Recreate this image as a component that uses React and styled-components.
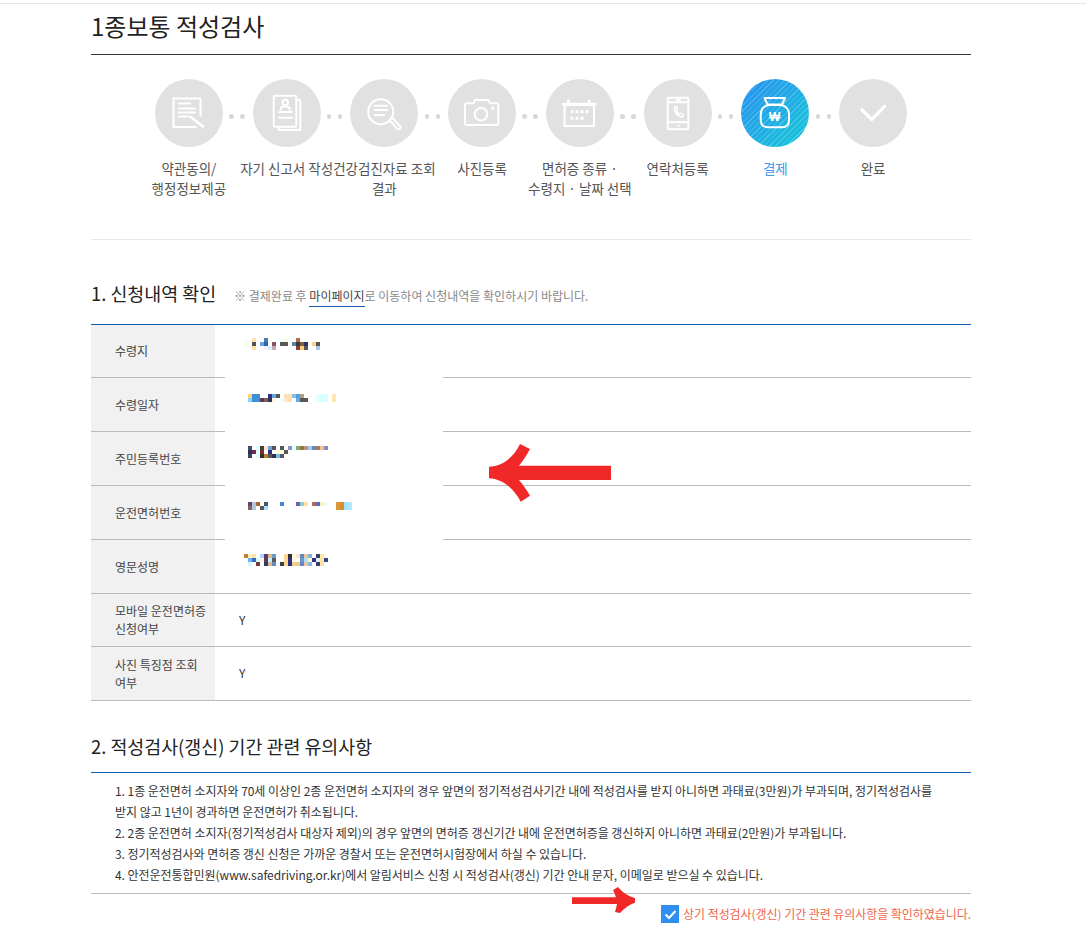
import React from "react";
import styled, { createGlobalStyle } from "styled-components";

const Global = createGlobalStyle`
  html, body { margin: 0; padding: 0; background: #fff; }
  body { font-family: "Noto Sans CJK KR", "Noto Sans", sans-serif; color: #333; overflow: hidden; }
`;
const Page = styled.div`
  height: 934px; padding-top: 3px; box-sizing: border-box; overflow: hidden;
`;
const TopRule = styled.div`height: 1px; background: #e6e6e6;`;
const Container = styled.main`width: 880px; margin: 0 0 0 91px; position: relative;`;
const Title = styled.h1`
  margin: 0; height: 51px; box-sizing: border-box; padding-top: 4px; border-bottom: 1px solid #333;
  font-size: 24px; font-weight: 400; line-height: 36px; color: #222;
`;
const Steps = styled.ol`
  list-style: none; margin: 0; padding: 24px 49px 0; height: 185px; box-sizing: border-box;
  display: grid; grid-template-columns: repeat(8, 97.75px); border-bottom: 1px solid #e8e8e8;
`;
const Step = styled.li`
  display: flex; flex-direction: column; align-items: center; position: relative;
  &:not(:last-child)::after {
    content: ""; position: absolute; left: 89px; top: 35px; width: 4.500px; height: 4.500px; border-radius: 50%;
    background: #d8d8d8; box-shadow: 11px 0 0 #d8d8d8;
  }
`;
const Circle = styled.div`
  width: 68px; height: 68px; border-radius: 50%; flex: none; overflow: hidden;
  background: ${p => p.$active
    ? "repeating-linear-gradient(-45deg, rgba(255,255,255,.2) 0 1px, transparent 1px 4px), linear-gradient(135deg, #2b8ff2, #14c9d6)"
    : "#e1e1e1"};
`;
const IconSvg = styled.svg`display: block;`;
const Label = styled.div`
  margin-top: 11px; width: 120px; text-align: center; font-size: 13.5px; line-height: 20px;
  color: ${p => p.$active ? "#3d97ee" : "#555"}; white-space: pre-line; flex: none;
`;
const SectionHead = styled.div`
  display: flex; align-items: baseline; gap: 18px; margin-top: ${p => p.$top}px; height: ${p => p.$h}px;
`;
const H2 = styled.h2`margin: 0; font-size: 18.4px; font-weight: 400; line-height: 28px; color: #222;`;
const Note = styled.p`
  margin: 0; font-size: 12px; color: #888; line-height: 18px;
`;
const PageLink = styled.span`
  color: #444; border-bottom: 1px solid #1a5aa8; padding-bottom: 2px;
`;
const Table = styled.div`border-top: 1px solid #0f5cb0; position: relative;`;
const Row = styled.div`
  display: grid; grid-template-columns: 124px 1fr; height: ${p => p.$h}px; box-sizing: border-box; border-bottom: 1px solid #bbb;
`;
const Th = styled.div`
  background: #f1f1f1; padding: 0 8px 0 24px; display: flex; align-items: center; font-size: 12px; line-height: 18px; color: #444; white-space: pre-line;
`;
const Td = styled.div`padding: 0 0 2px 24px; display: flex; align-items: center; font-size: 12px; color: #333;`;
const Redact = styled.div`
  position: absolute; left: 134px; top: 0; width: 218px; height: 215px; background: #fff;
`;
const Mosaic = styled.svg`position: absolute; left: ${p => p.$x}px; top: ${p => p.$y}px; shape-rendering: crispEdges;`;
const BigArrow = styled.svg`position: absolute; left: 397px; top: 118px;`;
const Notes = styled.ol`
  list-style: none; margin: 0; padding: 7px 24px 0; height: 122px; box-sizing: border-box; border-top: 1px solid #0f5cb0; border-bottom: 1px solid #bbb;
  font-size: 12px; line-height: 21px; color: #333; letter-spacing: -0.04px; word-break: keep-all;
`;
const Agree = styled.label`
  display: flex; justify-content: flex-end; align-items: center; gap: 4px; margin-top: 11px;
  font-size: 12px; color: #f0654f; line-height: 18px; letter-spacing: -0.06px;
`;
const Box = styled.span`
  width: 18px; height: 18px; background: #2f8ff0; display: flex; align-items: center; justify-content: center;
`;
const SmallArrow = styled.svg`position: absolute; left: 481px; top: 881px;`;

const stepsData = [
  ["약관동의/\n행정정보제공", "doc"],
  ["자기 신고서 작성", "id"],
  ["건강검진자료 조회\n결과", "search"],
  ["사진등록", "camera"],
  ["면허증 종류 ·\n수령지 · 날짜 선택", "cal"],
  ["연락처등록", "phone"],
  ["결제", "bag"],
  ["완료", "check"],
];

const icons = {
  doc: <><path d="M45.500 37V19.500H18.500V48H41"/><path d="M23.500 24.500H35M23.500 29.500H40M23.500 33.500H40M23.500 37.500H32"/><path d="M35 37.500L48 47.500" strokeWidth="2.600"/></>,
  id: <><rect x="20.700" y="16.700" width="22.600" height="31" rx="1"/><path d="M43.500 21H47.300V51H25.700V47.700"/><circle cx="32.300" cy="23.500" r="2.800"/><path d="M27.500 30.500C27.500 26.500 37 26.500 37 30.500M26 33H39M26 38.700H39"/></>,
  search: <><circle cx="30.700" cy="32.700" r="12.500"/><path d="M24.700 26.700H37.300M24.700 31H37.300M24.700 36H34"/><path d="M39.500 41L47 49.500C49 51.500 52 49 50 47L42 38.700"/></>,
  camera: <><path d="M19 24.300H25.500L27 21H40.500L42 24.300H48.500C49.500 24.300 50.300 25 50.300 26V44C50.300 45 49.500 46 48.500 46H19C18 46 17 45 17 44V26C17 25 18 24.300 19 24.300Z"/><circle cx="33" cy="35.300" r="6.300"/><circle cx="44.700" cy="29.300" r=".8"/></>,
  cal: <><path d="M18.500 26H48V47H18.500Z"/><path d="M17 25H49.500" strokeWidth="2.600"/><path d="M22.300 21.500V25M43.300 21.500V25" strokeWidth="2.600"/><path d="M24.500 32.700H27.500M29.500 32.700H32.500M34.500 32.700H37.500M39.500 32.700H42.500M24.500 39.300H27.500M29.500 39.300H32.500M34.500 39.300H37.500" strokeWidth="3" strokeLinecap="butt"/></>,
  phone: <><rect x="23.700" y="18.700" width="20.600" height="31.600" rx="1"/><path d="M23.700 23.300H44.300M23.700 43.300H44.300M32.500 21H36M34 46.800H34.600"/><path d="M30.500 28C29.500 32 33 38 38.500 38L39.500 36L36.500 34L35.200 35C33.800 34.500 32.800 33 32.500 31.500L33.500 30.500L32.500 27.500Z" strokeWidth="1.500"/></>,
  bag: <><path d="M23.500 19H44L41 25.500H26.500Z"/><path d="M28 26C22 27 19.700 31 19.700 36V41C19.700 46 23 48.300 27 48.300H41C45 48.300 48 46 48 41V36C48 31 46 27 40 26Z"/></>,
  check: <path d="M23 31L32.700 40.500L45.500 27.500" strokeWidth="3.200" strokeLinecap="square" strokeLinejoin="miter"/>,
};

function Icon({ name }) {
  return (
    <IconSvg width="68" height="68" viewBox="0 0 68 68" fill="none" stroke="#fff" strokeWidth="2" strokeLinecap="round" strokeLinejoin="round">
      {icons[name]}
      {name === "bag" && <text x="33.700" y="41.800" textAnchor="middle" fontSize="12" fontWeight="700" stroke="none" fill="#fff" fontFamily="Liberation Sans">₩</text>}
    </IconSvg>
  );
}

const rows = [
  ["수령지", 53, ""], ["수령일자", 54, ""], ["주민등록번호", 54, ""], ["운전면허번호", 54, ""], ["영문성명", 54, ""],
  ["모바일 운전면허증\n신청여부", 53, "Y"], ["사진 특징점 조회\n여부", 54, "Y"],
];

const mosaics = [
  { x: 153, y: 13, rows: [
    "- - ffe0b0 - - 4a7ab5 - - - f0ffff fff8e8 - - b07050",
    "fffbe6 - 55554f - 68a0e0 3060a8 - 80585f - 505a58 605a50 - 5888b0 3a3a3a 806040 303060 - ffd090 585858",
    "- - ffe0a8 - - f0f0f8 d8ecfc c8a8b8 - - - - - 884040 ffd080 585858 - - b0c8e8",
  ]},
  { x: 157, y: 69, rows: [
    "ffd080 3a90d0 3a90d0 - - 303080 60a8e0 585858 - ffe0b0 ffe0b0 80c0f0 50a0e0 b0a090 - - - e8ffff d8ffff d8ffff - ffe8b0",
    "90d0f8 3a90d0 4090d8 603858 806060 303050 fff4e0 - f0ffff ffe8c0 ffe0b0 - 60a8e8 585858 585858 - - e8ffff d8ffff d8ffff - ffe8b0",
  ]},
  { x: 157, y: 121, rows: [
    "405070 - e0ffff 404040 ffe8c8 70a0d8 585060 - 505858 - 9090c0 e8ffff 80a888 907838 c09088 a8c8f0 7088a8 a08070 f0c090 8090c0",
    "303050 702858 e0ffff 803030 - 303080 - fff8e0 fffce0 585858",
    "404060 - e0ffff 303030 c08030 585858 303050 70b8f0 585858",
  ]},
  { x: 157, y: 177, rows: [
    "604868 b0c8d8 a86830 - 405860 - - - 4888d8 - - - 6860b0 90d0d0 ffe0a8 - b07060 6868b0 fff0c0 e8fff8 - - d89838 d09030 a8e0ff b0e8ff",
    "806860 b0c8e0 - 585858 a8e0ff - - - - - - - - - - - - - - - - - d89838 d09030 a8e0ff b0e8ff",
  ]},
  { x: 153, y: 229, rows: [
    "c08030 fff4c8 ffe0b0 - a8d8ff 603868 e0b890 6898c8 - - ffd890 303030 fff8e0 ffe8c8 6088b8 e8c8a0 88b0d8 - 384068 ffe8b0 fffce8",
    "- 70b0f0 3070b8 d8f8ff fff8d0 603868 c8f0ff 585858 - - ffd890 303080 fffce0 - 6898c8 a8e0ff fff8d0 303088 e0f0ff ffe0a0 304888",
    "- d0f8ff - 703838 - 303870 e0b890 6888c0 - 384048 ffd890 303080 f0d090 f0c890 6088c8 e8c8a0 88b8e0 - 384068 ffe0a8",
  ]},
];

function Blocks({ data }) {
  const grid = data.rows.map(r => r.split(" "));
  const w = Math.max(...grid.map(r => r.length)) * 4;
  return (
    <Mosaic $x={data.x} $y={data.y} width={w} height={grid.length * 4} aria-hidden="true">
      {grid.flatMap((r, j) => r.map((c, i) => c === "-" ? null : <rect key={j + "-" + i} x={i * 4} y={j * 4} width="4" height="4" fill={"#" + c} />))}
    </Mosaic>
  );
}

export default function App() {
  return (
    <Page>
      <Global />
      <TopRule />
      <Container>
        <Title>1종보통 적성검사</Title>
        <Steps>
          {stepsData.map(([t, ic]) => (
            <Step key={t}>
              <Circle $active={ic === "bag"}><Icon name={ic} /></Circle>
              <Label $active={ic === "bag"}>{t}</Label>
            </Step>
          ))}
        </Steps>
        <SectionHead $top={39} $h={45}>
          <H2>1. 신청내역 확인</H2>
          <Note>※ 결제완료 후 <PageLink>마이페이지</PageLink>로 이동하여 신청내역을 확인하시기 바랍니다.</Note>
        </SectionHead>
        <Table>
          {rows.map(([h, ht, v]) => (
            <Row key={h} $h={ht}>
              <Th>{h}</Th>
              <Td>{v}</Td>
            </Row>
          ))}
          <Redact />
          {mosaics.map((m, i) => <Blocks key={i} data={m} />)}
          <BigArrow width="124" height="60" viewBox="0 0 124 60">
            <path d="M1 23.700C15 23 26 14 32 1L42 6C38 13 35 18 31 22.700H123V37H31C35 42 38 46 42 52.700L32.700 58.700C26 46 15 36 1 35.300Z" fill="#f02828"/>
          </BigArrow>
        </Table>
        <SectionHead $top={31} $h={40}><H2>2. 적성검사(갱신) 기간 관련 유의사항</H2></SectionHead>
        <Notes>
          <li>1. 1종 운전면허 소지자와 70세 이상인 2종 운전면허 소지자의 경우 앞면의 정기적성검사기간 내에 적성검사를 받지 아니하면 과태료(3만원)가 부과되며, 정기적성검사를 받지 않고 1년이 경과하면 운전면허가 취소됩니다.</li>
          <li>2. 2종 운전면허 소지자(정기적성검사 대상자 제외)의 경우 앞면의 면허증 갱신기간 내에 운전면허증을 갱신하지 아니하면 과태료(2만원)가 부과됩니다.</li>
          <li>3. 정기적성검사와 면허증 갱신 신청은 가까운 경찰서 또는 운전면허시험장에서 하실 수 있습니다.</li>
          <li>4. 안전운전통합민원(www.safedriving.or.kr)에서 알림서비스 신청 시 적성검사(갱신) 기간 안내 문자, 이메일로 받으실 수 있습니다.</li>
        </Notes>
        <Agree>
          <Box><svg width="13" height="11" viewBox="0 0 13 11" fill="none" stroke="#fff" strokeWidth="2"><path d="M1.500 5.500l3.500 3.500 6.500-7"/></svg></Box>
          상기 적성검사(갱신) 기간 관련 유의사항을 확인하였습니다.
        </Agree>
        <SmallArrow width="64" height="30" viewBox="0 0 64 30">
          <path d="M0 12.300H44C43 10 42 7 41 5L46 2C50 7 56 11 63 13V17.700C56 20 52 24 48 28L43 27C44 24 44.500 21 45 19H0Z" fill="#f02828"/>
        </SmallArrow>
      </Container>
    </Page>
  );
}
